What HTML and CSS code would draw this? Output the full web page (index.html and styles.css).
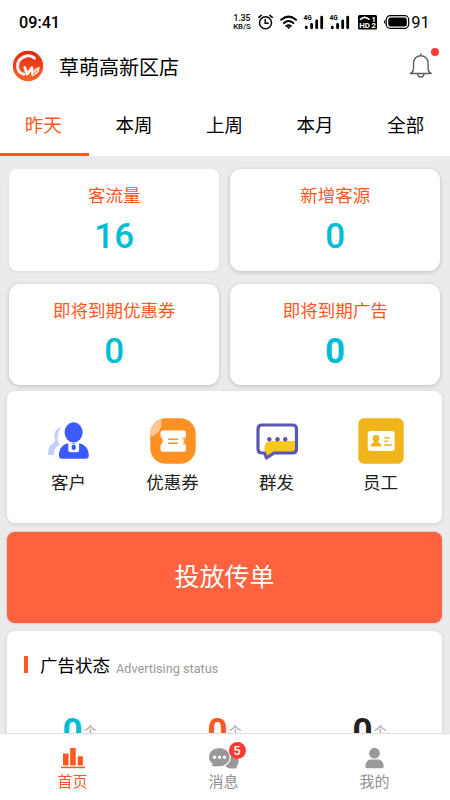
FILE: index.html
```html
<!DOCTYPE html>
<html lang="zh-CN">
<head>
<meta charset="utf-8">
<meta name="viewport" content="width=device-width, initial-scale=1">
<title>草萌高新区店</title>
<link rel="stylesheet" href="styles.css">
</head>
<body>
<div class="app">
  <header class="top">
    <div class="status">
      <span class="clock">09:41</span>
      <span class="speed"><span>1.35</span><span>KB/S</span></span>
      <svg class="status-icons" width="178" height="18" viewBox="0 0 178 18">
        <g fill="none" stroke="#000" stroke-width="1.5" stroke-linecap="round">
          <circle cx="8.500" cy="9.700" r="6"/><path d="M8.200 6.500v3.700h3M1.700 4.300l2.500-2M12.800 2.300l2.500 2"/>
          <path stroke-width="2" d="M24.200 6.800q7.400-6.300 14.800 0M26.900 10q4.700-4 9.400 0M29.400 13q2.200-1.600 4.400 0"/>
        </g>
        <path d="M29.700 14q1.900-1 3.800 0l-1.900 2z"/>
        <g stroke="#000" stroke-width="2.800" stroke-linecap="round">
          <path d="M49.300 14.800v-.6M54.600 14.800v-3.500M59.700 14.800V8M64.700 14.800V4.200M75.300 14.800v-.6M80.600 14.800v-3.500M85.700 14.800V8M90.700 14.800V4.200"/>
        </g>
        <g class="tiny"><text x="46.500" y="7.200">4G</text><text x="72.500" y="7.200">4G</text></g>
        <rect x="101" y="2" width="19" height="14.500" rx="1.500"/>
        <path fill="none" stroke="#fff" stroke-width="1.600" d="M103 6.700q4.800-4.500 9.500 0"/>
        <g class="hd"><text x="102.200" y="15.300">HD</text><text x="114.500" y="8.700">1</text><text x="114.500" y="15.300">2</text></g>
        <rect x="129.200" y="2.700" width="22.500" height="12.600" rx="4" fill="none" stroke="#000" stroke-width="1.200"/>
        <rect x="131.300" y="4.500" width="18.500" height="9" rx="2.500"/><path d="M128.200 6.800q-2.500 2.200 0 4.500z"/>
        <text class="battery" x="154.300" y="15">91</text>
      </svg>
    </div>
    <div class="shop">
      <svg class="logo" width="32" height="32" viewBox="0 0 32 32">
        <defs><linearGradient id="logo-bg" x1="0" y1="0" x2="0" y2="1"><stop offset="0" stop-color="#df260f"/><stop offset="1" stop-color="#ff6426"/></linearGradient></defs>
        <circle cx="16" cy="16" r="15.200" fill="url(#logo-bg)"/>
        <path d="M22.500 8.200C17 3.200 6.200 7 5.600 15.300c-.4 5 2.500 8.200 6 8.900" fill="none" stroke="#fff3f0" stroke-width="3" stroke-linecap="round"/>
        <path d="M12.800 17.400l2.200 7 4.900-6.600.8 7" fill="none" stroke="#fff3f0" stroke-width="2.800" stroke-linecap="round" stroke-linejoin="round"/>
        <path d="M20.500 25.700c.2-4.600 3-8 7.100-9-.1 4.600-2 8.300-7.100 9z" fill="#fff3f0"/><path d="M21 25l4.300-5.200" stroke="#fa5422"/>
      </svg>
      <h1>草萌高新区店</h1>
      <span class="bell">
        <svg width="24" height="26" viewBox="0 0 24 26" fill="none" stroke="#606060" stroke-width="1.400">
          <path d="M1.500 20.500q3-1.500 3-5V10a7.300 7.300 0 0 1 14.600 0v5.500q0 3.500 3 5zM11.800 2.600V1M8.600 21q.3 3 3.200 3t3.200-3" stroke-linejoin="round" stroke-linecap="round"/>
        </svg>
        <i class="dot"></i>
      </span>
    </div>
    <nav class="tabs"><a class="active">昨天</a><a>本周</a><a>上周</a><a>本月</a><a>全部</a></nav>
  </header>

  <main>
    <section class="stats">
      <div class="card stat"><h2>客流量</h2><b>16</b></div>
      <div class="card stat"><h2>新增客源</h2><b>0</b></div>
      <div class="card stat"><h2>即将到期优惠券</h2><b>0</b></div>
      <div class="card stat"><h2>即将到期广告</h2><b class="strong">0</b></div>
    </section>
    <section class="card actions">
      <a><svg width="46" height="46" viewBox="0 0 46 46">
        <path fill="#c5ceff" d="M15.500 9C10 10 7.500 15 8.700 20c.8 3 .3 4.300-2.200 6-3.500 2.200-4.500 4.200-4.300 11h5.600c.3-5.500 2-8.500 6-10.200-3-4-3.500-11 1.700-17.800z"/>
        <ellipse cx="27.600" cy="14.400" rx="9" ry="10.200" fill="#3d5afe"/>
        <path fill="#3d5afe" d="M21.500 25.400h12.300c5.700 1.200 9 5.500 9 12.300q0 3-3 3H16q-3 0-3-3c0-6.800 3-11.100 8.500-12.300z"/>
        <path fill="#fff" d="M22.300 24.500l5.300 2 5.500-2v7.300q0 2.500-2.500 2.500h-5.800q-2.500 0-2.500-2.500z"/><rect x="25.700" y="26.800" width="4" height="5.200" rx="1.800" fill="#3d5afe"/>
      </svg><span>客户</span></a>
      <a><svg width="46" height="46" viewBox="0 0 46 46">
        <rect x=".3" y=".3" width="45.400" height="45.400" rx="15.500" fill="#ff9124"/>
        <path fill="#ffc793" d="M11.300 1C5 3 .3 8.500.3 16v2C7.500 18 13 11 11.300 1z"/>
        <path fill="#fff" d="M13 12.500h20.500q2.500 0 2.500 2.500v3.300q-4.500 4.700 0 9.300v3.600q0 2.500-2.500 2.500H13q-2.500 0-2.500-2.500v-3.600q4.500-4.600 0-9.300V15q0-2.500 2.500-2.500z"/>
        <path fill="#ffc793" d="M35.800 18.300l-3.200.9v2.800l1.500 1zM35.800 27.600l-3.200-.9v-1.600l1.500-1z"/>
        <path stroke="#ff9124" stroke-width="1.500" d="M18 21.300h10M18 25.300h10"/>
      </svg><span>优惠券</span></a>
      <a><svg width="46" height="46" viewBox="0 0 46 46">
        <path fill="#f4c91b" d="M17.500 23H41v12H20l-8 4-1.500-5v-4q0-7 7-7z"/>
        <path fill="none" stroke="#5857b5" stroke-width="3.200" stroke-linejoin="round" d="M8 7h30.500q4 0 4 4v20q0 4-4 4H20l-7.500 5L10.500 35H8q-4 0-4-4V11q0-4 4-4z"/>
        <g fill="#5857b5"><circle cx="15.300" cy="21.300" r="2.200"/><circle cx="23.500" cy="21.300" r="2.200"/><circle cx="31.200" cy="21.300" r="2.200"/></g>
      </svg><span>群发</span></a>
      <a><svg width="46" height="46" viewBox="0 0 46 46">
        <rect x=".3" y=".3" width="45.400" height="45.400" rx="5.500" fill="#f1b51c"/>
        <rect x="9.700" y="13" width="27" height="20" rx="3" fill="#fff"/>
        <g fill="#f1b51c"><circle cx="18" cy="20.500" r="3.400"/><path d="M16.300 22.500h3.400v1.700q3.600.8 3.900 4.300H12.500q.3-3.500 3.800-4.300z"/></g>
        <path stroke="#f1b51c" stroke-width="1.500" d="M26.300 19.800h5.500M26.300 23.300h4M26.300 27h7.500"/>
      </svg><span>员工</span></a>
    </section>
    <button class="launch">投放传单</button>
    <section class="card ads">
      <div class="ads-head"><i></i><h2>广告状态</h2><small>Advertising status</small></div>
      <div class="counts">
        <div class="cyan"><b>0</b><span>个</span></div>
        <div class="orange"><b>0</b><span>个</span></div>
        <div class="black"><b>0</b><span>个</span></div>
      </div>
    </section>
  </main>

  <nav class="bottom">
    <a class="active"><svg width="26" height="24" viewBox="0 0 26 24" fill="#ff5722">
      <rect x="3" y="7.500" width="5.500" height="12"/><rect x="10.200" y="2" width="5.500" height="17.500"/><rect x="17.700" y="10.300" width="5.200" height="9.200"/><rect x="1" y="20.700" width="24" height="1.500"/></svg><span>首页</span></a>
    <a><span class="message"><svg width="32" height="24" viewBox="0 0 32 24">
      <path fill="#999" d="M22 7a8.500 8 0 0 1 7.500 12l-1.500 3.500H23a8 8 0 0 1-6.500-4z"/>
      <path fill="#999" stroke="#fff" stroke-width="1.200" d="M11.300 1.300c6.200 0 11 4.300 11 9.600s-4.800 10-11 10H3.400l.7-2.900C1.500 16.200.4 13.800.4 10.900c0-5.300 4.700-9.600 10.900-9.600z"/>
      <g fill="#fff"><circle cx="6.500" cy="11.200" r="1.700"/><circle cx="11.500" cy="11.200" r="1.700"/><circle cx="16.500" cy="11.200" r="1.700"/></g></svg><em>5</em></span><span>消息</span></a>
    <a><svg width="26" height="24" viewBox="0 0 26 24" fill="#999">
      <circle cx="12.500" cy="7.200" r="5.400"/><path d="M8 13.500h9q4.700 1.500 4.700 7 0 1.700-1.700 1.700H5q-1.700 0-1.700-1.700 0-5.500 4.700-7z"/></svg><span>我的</span></a>
  </nav>
</div>
</body>
</html>
```
FILE: styles.css
```css
* { box-sizing: border-box; }
body {
  margin: 0;
  font-family: Roboto, "Noto Sans CJK SC", sans-serif;
  color: #000;
}
h1, h2 { margin: 0; font-weight: 400; }
svg { display: block; }
.app {
  display: flex;
  flex-direction: column;
  width: 450px;
  height: 800px;
  overflow: hidden;
  background: #ebebeb;
}
.top { flex: none; height: 156px; background: #fff; }
.status { display: flex; align-items: center; height: 44px; padding: 0 15px 0 19px; }
.clock { margin-right: auto; padding-top: 2px; font-size: 16.2px; font-weight: 500; line-height: 20px; }
.speed {
  display: flex;
  flex-direction: column;
  width: 18px;
  margin-right: 6px;
  padding-top: 1px;
  font-size: 7.8px;
  font-weight: 500;
  line-height: 7.5px;
  text-align: center;
}
.speed span:first-child { font-size: 8.5px; }
.tiny { font-size: 6.5px; font-weight: 700; }
.hd { font-size: 7.8px; font-weight: 700; fill: #fff; }
.battery { font-size: 16.5px; font-weight: 400; }
.shop { display: flex; align-items: center; height: 44px; padding: 0 17px 0 12px; }
.shop h1 {
  margin-left: 15px;
  padding-top: 3px;
  font-size: 20px;
  line-height: 28px;
}
.bell { position: relative; margin-left: auto; }
.dot {
  position: absolute;
  top: -5px;
  right: -6px;
  width: 8px;
  height: 8px;
  border-radius: 50%;
  background: #f93b31;
}
.tabs { display: grid; grid-template-columns: repeat(5, 90.6px); height: 68px; margin-left: -2px; }
.tabs a {
  padding-top: 22px;
  border-bottom: 3px solid transparent;
  font-size: 18.5px;
  line-height: 32px;
  text-align: center;
}
.tabs .active { color: #ff5722; border-color: #ff5722; }
main { flex: 1; min-height: 0; padding: 12.5px 8px 0 7px; overflow: hidden; }
.card { border-radius: 8px; background: #fff; box-shadow: 0 1px 4px rgba(0, 0, 0, .12); }
.stats {
  display: grid;
  grid-template-columns: 209.5px 209.5px;
  grid-template-rows: 102px 101px;
  gap: 13px 11.5px;
  margin-left: 2.4px;
}
.stat { text-align: center; border-radius: 11px; box-shadow: 0 1px 4px rgba(0, 0, 0, .2); }
.stat:first-child { border-radius: 8px; box-shadow: 0 1px 3px rgba(0, 0, 0, .07); }
.stat h2 { padding-top: 15px; color: #ff5722; font-size: 17.5px; line-height: 25px; }
.stat b { display: block; margin-top: 7px; color: #00bcd4; font-size: 35px; font-weight: 500; line-height: 41px; }
.stat .strong { font-weight: 700; }
.actions { display: grid; grid-template-columns: repeat(4, 104px); height: 132px; margin-top: 6px; padding: 27.5px 0 0 9.5px; }
.actions a {
  display: flex;
  flex-direction: column;
  align-items: center;
  gap: 7px;
  color: #212121;
  font-size: 17.5px;
  line-height: 25px;
}
.launch {
  display: block;
  width: 100%;
  height: 91px;
  margin: 9px 0 8.5px;
  padding: 2px 0 0;
  border: 0;
  border-radius: 8px;
  background: #ff623f;
  box-shadow: 0 0 2px rgba(0, 0, 0, .3);
  color: #fff;
  font: 400 25px/36px Roboto, "Noto Sans CJK SC", sans-serif;
}
.ads { height: 180px; padding: 19.5px 0 0 17px; }
.ads-head { display: flex; align-items: center; height: 28px; }
.ads-head i { width: 4px; height: 17px; margin-right: 12px; background: #ff5722; }
.ads-head h2 { margin-top: -1px; font-size: 17.5px; }
.ads-head small { margin: 8px 0 0 6px; color: #999; font-size: 12.7px; }
.counts { display: grid; grid-template-columns: repeat(3, 145px); margin: 32px 0 0 -17px; }
.counts div { display: flex; align-items: flex-start; padding-left: 55.5px; }
.counts b { font-size: 35px; font-weight: 700; line-height: 41px; }
.counts span { margin: 12px 0 0 1.5px; color: #999; font-size: 12.5px; line-height: 18px; }
.cyan b { color: #00bcd4; }
.orange b { color: #ff5722; }
.black b { color: #212121; }
.bottom {
  flex: none;
  display: grid;
  grid-template-columns: 145px 157px 145px;
  height: 67px;
  border-top: 1px solid #dedede;
  background: #fff;
}
.bottom a {
  display: flex;
  flex-direction: column;
  align-items: center;
  padding-top: 12px;
  color: #909090;
  font-size: 15px;
  line-height: 25px;
}
.bottom .active { color: #ff5722; }
.message { position: relative; }
.message em {
  position: absolute;
  top: -4.5px;
  left: 21px;
  width: 17px;
  height: 17px;
  border-radius: 50%;
  background: #f93b31;
  color: #fff;
  font-size: 13px;
  font-style: normal;
  font-weight: 500;
  line-height: 18px;
  text-align: center;
}
```
